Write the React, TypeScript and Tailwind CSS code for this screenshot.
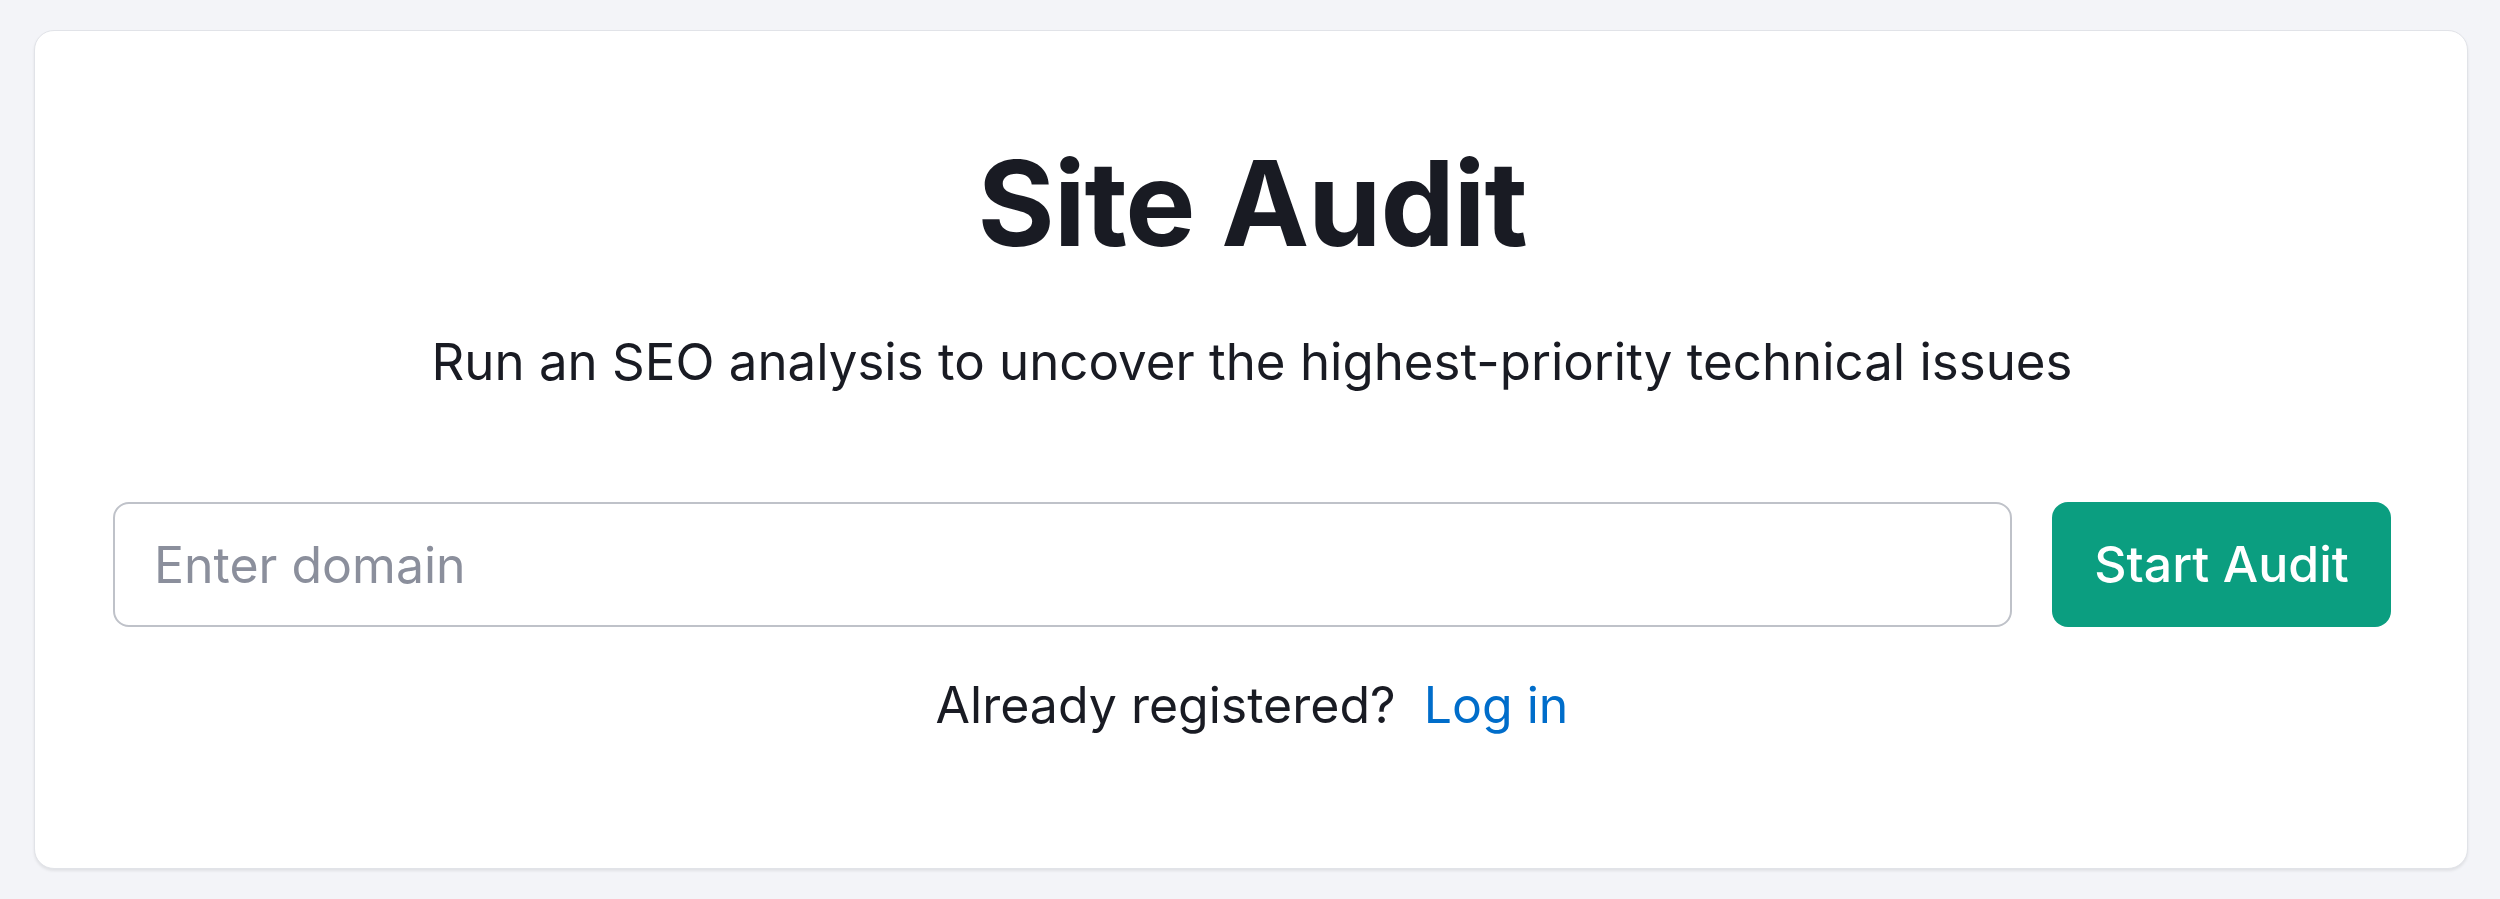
import { useState } from "react";

const FONT = { fontFamily: "Inter, 'Noto Sans', sans-serif" };

export default function App() {
    const [domain, setDomain] = useState("");

    return (
        <div className="min-h-[899px] w-full bg-[#f3f4f8] pt-[30px] pl-[34px] pr-[32px]" style={FONT}>
            <div className="flex h-[839px] flex-col items-center rounded-[20px] border border-[#e1e3e8] bg-white pt-[113px] pl-[78px] pr-[76px] shadow-[0_2px_3px_rgba(0,0,0,0.08)]">
                <h1 className="text-[118px] font-bold leading-none tracking-[-0.01em] text-[#191b23]">
                    Site Audit
                </h1>
                <p className="mt-[74px] text-[51px] leading-none text-[#191b23]">
                    Run an SEO analysis to uncover the highest-priority technical issues
                </p>

                <form
                    className="mt-[115px] flex w-full gap-[40px]"
                    onSubmit={(event) => event.preventDefault()}
                >
                    <input
                        value={domain}
                        onChange={(event) => setDomain(event.target.value)}
                        placeholder="Enter domain"
                        className="h-[125px] flex-1 rounded-[16px] border-2 border-[#bfc2c9] bg-white px-[39px] text-[50px] text-[#191b23] outline-none placeholder:text-[#8b8f9c]"
                    />
                    <button
                        type="submit"
                        className="h-[125px] w-[339px] rounded-[16px] bg-[#0b9e80] text-[50px] font-medium text-white"
                    >
                        Start Audit
                    </button>
                </form>

                <p className="mt-[53px] text-[50px] leading-none text-[#191b23]">
                    Already registered?{"\u00a0 "}
                    <a href="#" className="text-[#006dca]">
                        Log in
                    </a>
                </p>
            </div>
        </div>
    );
}
